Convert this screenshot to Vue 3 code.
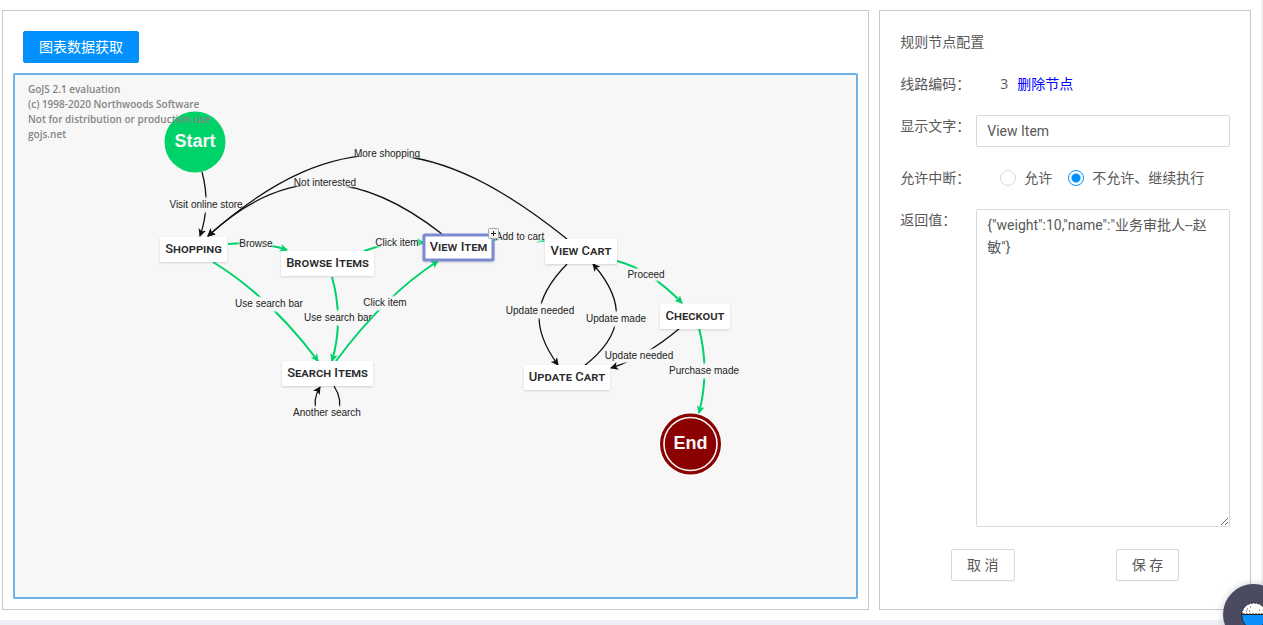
<script setup>
import { ref } from 'vue'

const label = ref('View Item')
const interrupt = ref('no')
const result = ref('{"weight":10,"name":"业务审批人--赵敏"}')

const watermark = [
  { text: 'GoJS 2.1 evaluation', y: 93 },
  { text: '(c) 1998-2020 Northwoods Software', y: 108 },
  { text: 'Not for distribution or production use', y: 123 },
  { text: 'gojs.net', y: 138 },
]

// Links are painted in order, each with its own label on top of its line.
const links = [
  { d: 'M202 172 Q211 205 200 236', text: 'Visit online store', x: 206, y: 205, w: 78 },
  { d: 'M228 244 Q260 241 287 250', text: 'Browse', x: 256, y: 244, w: 38, main: true },
  { d: 'M213 262 Q270 297 318 361', text: 'Use search bar', x: 269, y: 304, w: 74, main: true },
  { d: 'M364 251 Q394 240 424 243', text: 'Click item', x: 397, y: 243, w: 50, main: true },
  { d: 'M332 277 Q344 320 332 361', text: 'Use search bar', x: 338, y: 318, w: 74, main: true },
  { d: 'M442 234 C364 173 289 161 208 236', text: 'Not interested', x: 325, y: 183, w: 68 },
  { d: 'M336 361 Q385 295 438 261', text: 'Click item', x: 385, y: 303, w: 50, main: true },
  { d: 'M494 240 Q520 234 544 241', text: 'Add to cart', x: 520, y: 237, w: 58, main: true },
  { d: 'M334 386 Q343 400 338 413 H317 Q312 400 320 387', text: 'Another search', x: 327, y: 413, w: 76 },
  { d: 'M567 239 C440 137 340 118 208 236', text: 'More shopping', x: 387, y: 154, w: 70 },
  { d: 'M567 264 C532 300 531 328 558 365', text: 'Update needed', x: 540, y: 311, w: 76 },
  { d: 'M584 366 C624 335 627 303 593 264', text: 'Update made', x: 616, y: 319, w: 66 },
  { d: 'M617 261 Q649 269 682 303', text: 'Proceed', x: 646, y: 275, w: 42, main: true },
  { d: 'M680 328 Q646 357 611 368', text: 'Update needed', x: 639, y: 356, w: 76 },
  { d: 'M699 328 Q710 371 699 413', text: 'Purchase made', x: 704, y: 371, w: 76, main: true },
]

const nodes = [
  { text: 'Shopping', x: 160, y: 237, w: 67 },
  { text: 'Browse Items', x: 281, y: 251, w: 93 },
  { text: 'Search Items', x: 282, y: 361, w: 91 },
  { text: 'View Item', x: 424, y: 235, w: 69, selected: true },
  { text: 'View Cart', x: 545, y: 239, w: 72 },
  { text: 'Update Cart', x: 524, y: 365, w: 86 },
  { text: 'Checkout', x: 660, y: 304, w: 70 },
]
</script>

<template>
  <div class="page">
    <main class="board">
      <section class="panel chart-panel">
        <button type="button" class="btn primary">图表数据获取</button>
        <div class="canvas">
          <svg class="diagram" role="img" aria-label="流程图">
            <defs>
              <radialGradient id="label-bg">
                <stop offset="0" stop-color="#f7f7f7" />
                <stop offset="0.7" stop-color="#f7f7f7" />
                <stop offset="1" stop-color="#f7f7f7" stop-opacity="0" />
              </radialGradient>
              <marker id="arrow" viewBox="0 0 8 8" refX="7" refY="4" markerWidth="8" markerHeight="8" markerUnits="userSpaceOnUse" orient="auto">
                <path d="M0 0 L8 4 L0 8 L2 4 Z" fill="#111" />
              </marker>
              <marker id="arrow-main" viewBox="0 0 8 8" refX="7" refY="4" markerWidth="8" markerHeight="8" markerUnits="userSpaceOnUse" orient="auto">
                <path d="M0 0 L8 4 L0 8 L2 4 Z" fill="#00d26a" />
              </marker>
            </defs>
            <g transform="translate(-15 -75)">
              <g v-for="(l, i) in links" :key="i">
                <path :d="l.d" class="link" :class="{ main: l.main }" :marker-end="l.main ? 'url(#arrow-main)' : 'url(#arrow)'" />
                <ellipse :cx="l.x" :cy="l.y" :rx="l.w / 2" ry="9" fill="url(#label-bg)" />
                <text class="link-text" :x="l.x" :y="l.y + 3">{{ l.text }}</text>
              </g>
              <circle cx="195" cy="142" r="30.5" fill="#00d26a" />
              <text class="terminal" x="195" y="147">Start</text>
              <g v-for="n in nodes" :key="n.text">
                <rect class="node" :class="{ selected: n.selected }" :x="n.x" :y="n.y" :width="n.w" height="25" rx="1" />
                <text class="node-text" :x="n.x + n.w / 2" :y="n.y + 16">{{ n.text }}</text>
              </g>
              <circle cx="690.5" cy="444" r="30.5" fill="#8b0000" />
              <circle cx="690.5" cy="444" r="26.5" fill="none" stroke="#f7f7f7" stroke-width="1.6" />
              <text class="terminal" x="690.5" y="449">End</text>
              <rect x="488.5" y="228.5" width="10" height="10" rx="1" fill="#f4f4f4" stroke="#aaa" />
              <path d="M491 233.5h5M493.5 231v5" stroke="#222" />
              <text v-for="w in watermark" :key="w.y" class="watermark" x="28" :y="w.y">{{ w.text }}</text>
            </g>
          </svg>
        </div>
      </section>

      <form class="panel config" @submit.prevent>
        <h2 class="title">规则节点配置</h2>
        <div class="row">
          <span class="name">线路编码：</span>
          <span class="code">3</span>
          <a href="#" class="delete">删除节点</a>
        </div>
        <div class="row">
          <label class="name" for="node-label">显示文字：</label>
          <input id="node-label" v-model="label" class="field" type="text" />
        </div>
        <div class="row" role="radiogroup" aria-labelledby="interrupt-name">
          <span id="interrupt-name" class="name">允许中断：</span>
          <div class="options">
            <label class="option"><input v-model="interrupt" type="radio" name="interrupt" value="yes" />允许</label>
            <label class="option"><input v-model="interrupt" type="radio" name="interrupt" value="no" />不允许、继续执行</label>
          </div>
        </div>
        <div class="row">
          <label class="name" for="node-result">返回值：</label>
          <textarea id="node-result" v-model="result" class="field area"></textarea>
        </div>
        <div class="actions">
          <button type="button" class="btn">取 消</button>
          <button type="submit" class="btn">保 存</button>
        </div>
      </form>
    </main>

    <button type="button" class="helper" aria-label="助手">
      <svg width="28" height="28" viewBox="0 0 28 28">
        <path d="M2 13 A12 11 0 0 1 26 13 Z" fill="#fff" stroke="#222" stroke-dasharray="2 1" />
        <path d="M1.500 13.500 H26.500 Q26 27 14 27 Q2 27 1.500 13.500 Z" fill="#0b8ffb" stroke="#222" />
        <path d="M7 8h1M10 6h1M6 10h1M9 10h1M19 9h1" stroke="#555" />
      </svg>
    </button>
  </div>
</template>

<style>
body {
  background: #edf1f5;
}
</style>

<style scoped>
.page {
  padding: 0 2px 5px 0;
  overflow: hidden;
  font: 14px/22px "Open Sans", "Noto Sans CJK SC", sans-serif;
  color: #595959;
}
.board {
  display: grid;
  grid-template-columns: minmax(0, 7fr) minmax(0, 3fr);
  gap: 10px;
  padding: 10px 10px 10px 2px;
  background: #fff;
}
.panel {
  box-sizing: border-box;
  border: 1px solid #c8c8c8;
}
.chart-panel {
  display: flex;
  flex-direction: column;
  align-items: flex-start;
  gap: 10px;
  padding: 20px 10px 10px;
}
.config {
  padding: 20px;
}
.btn {
  box-sizing: border-box;
  height: 32px;
  padding: 0 15px;
  border: 1px solid #d9d9d9;
  border-radius: 2px;
  background: #fff;
  box-shadow: 0 2px 0 rgba(0, 0, 0, 0.016);
  color: #595959;
  font: inherit;
  cursor: pointer;
}
.primary {
  margin-left: 10px;
  border-color: #0091ff;
  background: #0091ff;
  color: #fff;
}
.canvas {
  box-sizing: border-box;
  align-self: stretch;
  flex: 1;
  min-height: 526px;
  border: 2px solid #6cb2eb;
  border-radius: 2px;
  background: #f7f7f7;
}
.diagram {
  display: block;
  width: 100%;
  height: 522px;
}
.link {
  fill: none;
  stroke: #111;
  stroke-width: 1.3px;
}
.link.main {
  stroke: #00d26a;
  stroke-width: 2px;
}
.link-text {
  font: 10px "Liberation Sans", Arial, sans-serif;
  fill: #222;
  text-anchor: middle;
}
.node {
  fill: #fff;
  filter: drop-shadow(0 1px 1px rgba(0, 0, 0, 0.15));
}
.node.selected {
  stroke: #7a8ccf;
  stroke-width: 3px;
}
.node-text {
  font: small-caps 500 13px Roboto, "Liberation Sans", sans-serif;
  fill: #2a2a2a;
  text-anchor: middle;
}
.terminal {
  font: bold 18px "Liberation Sans", Arial, sans-serif;
  fill: #f5f5f5;
  text-anchor: middle;
}
.watermark {
  font: 600 10px "Open Sans", sans-serif;
  fill: #858585;
}
.title {
  margin: 0 0 20px;
  font: inherit;
}
.row {
  display: flex;
  align-items: flex-start;
  margin-bottom: 20px;
}
.name {
  flex: 0 0 76px;
  white-space: nowrap;
}
.code {
  margin-left: 24px;
}
.delete {
  margin-left: 9px;
  color: #00f;
  text-decoration: none;
}
.field {
  box-sizing: border-box;
  flex: 1;
  min-width: 0;
  height: 32px;
  padding: 4px 10px;
  border: 1px solid #d9d9d9;
  border-radius: 2px;
  background: #fff;
  color: #595959;
  font: 14px/22px Roboto, "Noto Sans CJK SC", sans-serif;
  outline: none;
}
.options {
  display: flex;
  gap: 16px;
  margin-left: 24px;
}
.option {
  display: flex;
  align-items: center;
  gap: 8px;
  white-space: nowrap;
}
.option input {
  appearance: none;
  box-sizing: border-box;
  width: 16px;
  height: 16px;
  margin: 0;
  border: 1px solid #d9d9d9;
  border-radius: 50%;
  background: #fff;
}
.option input:checked {
  border-color: #0091ff;
  background: radial-gradient(circle, #0091ff 0 4px, #fff 5px);
}
.area {
  height: 318px;
}
.actions {
  display: flex;
  justify-content: space-around;
  padding-top: 2px;
}
.helper {
  position: fixed;
  right: -21px;
  bottom: -20px;
  display: flex;
  align-items: center;
  justify-content: center;
  width: 61px;
  height: 61px;
  padding: 0;
  border: 0;
  border-radius: 50%;
  background: #4a4a60;
  box-shadow: 0 0 8px rgba(0, 0, 0, 0.2);
}
</style>
